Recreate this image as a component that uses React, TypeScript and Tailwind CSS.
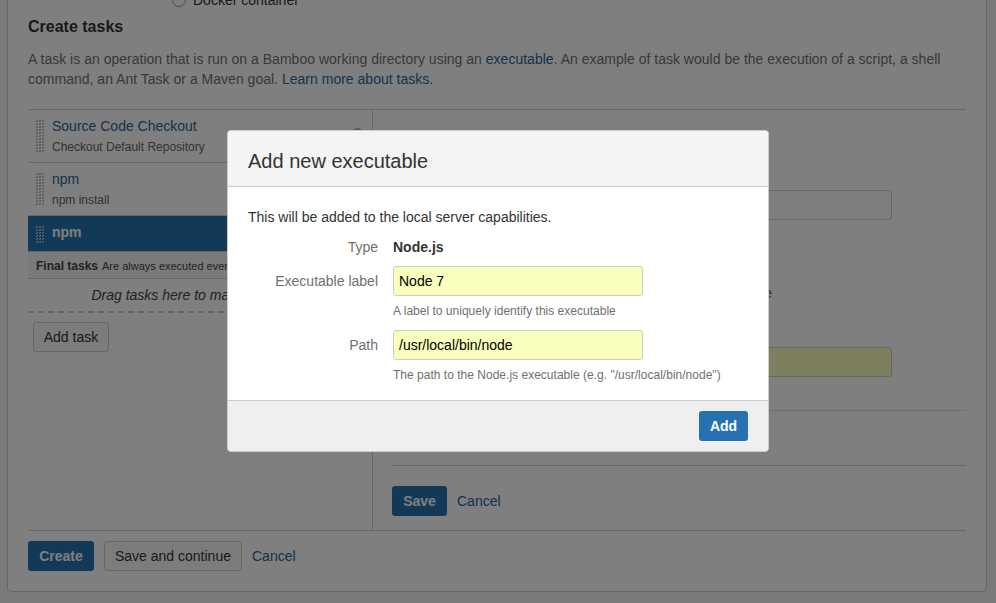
import React from "react";

function Grip({ rows, light = false }: { rows: number; light?: boolean }) {
  const dots: React.ReactNode[] = [];
  for (let y = 0; y < rows; y++) {
    for (let x = 0; x < 3; x++) {
      dots.push(
        <g key={`${x}-${y}`}>
          <rect x={x * 3} y={y * 3} width="2" height="2" fill={light ? "#5f8fb8" : "#e4e4e4"} />
          <rect x={x * 3 + 1} y={y * 3} width="1" height="1" fill={light ? "#d8d8d8" : "#a4a4a4"} />
          <rect x={x * 3} y={y * 3 + 1} width="1" height="1" fill={light ? "#c4c4c4" : "#a4a4a4"} />
        </g>
      );
    }
  }
  return (
    <svg className="ml-2 shrink-0" width="8" height={rows * 3 - 1} shapeRendering="crispEdges">
      {dots}
    </svg>
  );
}

function TaskRow({ title, detail }: { title: string; detail: string }) {
  return (
    <div className="flex h-[53px] border-b border-[#ccc] pt-[10px]">
      <Grip rows={11} />
      <div className="ml-2 -mt-1">
        <div className="h-[21px] text-[#2a6496]">{title}</div>
        <div className="h-5 text-xs leading-5 text-[#666]">{detail}</div>
      </div>
    </div>
  );
}

function Field({ label, value, hint }: { label: string; value: string; hint: string }) {
  return (
    <div className="flex h-16">
      <div className="w-[130px] pt-[5px] text-right text-[#707070]">{label}</div>
      <div className="ml-[15px]">
        <input
          className="block h-[30px] w-[250px] rounded-[3px] border border-[#ccc] bg-[#faffbd] px-[5px] text-sm text-black outline-none"
          defaultValue={value}
        />
        <div className="mt-[5px] text-xs leading-5 tracking-[0.015px] whitespace-nowrap text-[#707070]">{hint}</div>
      </div>
    </div>
  );
}

const primary = "flex h-[30px] items-center justify-center rounded-[3px] bg-[#2672b0] font-bold text-white";
const secondary =
  "flex h-[30px] items-center justify-center rounded-[3px] border border-[#ccc] bg-[#f9f9f9] text-[#333]";

function Page() {
  return (
    <div className="h-[603px] overflow-hidden bg-[#f5f5f5]">
      <div className="ml-[7px] flex h-[592px] w-[980px] flex-col rounded-b-[5px] border border-t-0 border-[#ccc] bg-white px-5">
        <div className="flex h-[10px] shrink-0 items-end pl-36">
          <div className="mb-[3px] h-[14px] w-[14px] rounded-full border border-[#999] bg-white" />
          <div className="ml-[7px] leading-5 text-[#333]">Docker container</div>
        </div>
        <h3 className="mt-[7px] h-5 text-base leading-5 font-bold text-[#333]">Create tasks</h3>
        <p className="mt-3 h-[60px] tracking-[0.013px] whitespace-nowrap text-[#707070]">
          A task is an operation that is run on a Bamboo working directory using an{" "}
          <span className="text-[#2a6496]">executable</span>. An example of task would be the execution of a script, a shell
          <br />
          command, an Ant Task or a Maven goal. <span className="text-[#2a6496]">Learn more about tasks.</span>
        </p>
        <div className="flex h-[422px] border-y border-[#ccc]">
          <div className="w-[345px] border-r border-[#ccc]">
            <div className="relative">
              <TaskRow title="Source Code Checkout" detail="Checkout Default Repository" />
              <div className="absolute top-[18px] right-2 h-[13px] w-[13px] rounded-full bg-[#b0b0b0]" />
            </div>
            <TaskRow title="npm" detail="npm install" />
            <div className="flex h-9 border-b border-[#ccc] bg-[#2672b0] pt-[10px]">
              <Grip rows={6} light />
              <div className="ml-2 -mt-1 font-bold text-white">npm</div>
            </div>
            <div className="flex h-[27px] items-center border-b border-[#ccc] bg-[#f5f5f5] pt-[2px] pl-2 whitespace-nowrap text-[#444]">
              <span className="text-xs font-bold">Final tasks</span>
              <span className="ml-1 text-[11px]">Are always executed even if a previous task fails</span>
            </div>
            <div className="h-8 pt-[6px] text-center whitespace-nowrap text-[#444] italic">Drag tasks here to make them final</div>
            <svg className="block" width="344" height="2">
              <path d="M0 1H344" stroke="#ccc" strokeWidth="2" strokeDasharray="6 4" />
            </svg>
            <div className={`mt-[9px] ml-[5px] w-[76px] ${secondary}`}>Add task</div>
          </div>
          <div className="ml-[19px] w-[574px]">
            <div className="mt-20 h-[30px] w-[500px] rounded-[3px] border border-[#ccc]" />
            <div className="mt-[63px] h-5 w-[380px] text-right text-[#2a6496]">Add new executable</div>
            <div className="mt-11 h-[30px] w-[500px] rounded-[3px] border border-[#ccc] bg-[#faffbd]" />
            <div className="mt-[33px] border-t border-[#ddd]" />
            <div className="mt-[54px] border-t border-[#ccc]" />
            <div className="mt-5 flex items-center">
              <div className={`w-[55px] ${primary}`}>Save</div>
              <span className="ml-[10px] text-[#2a6496]">Cancel</span>
            </div>
          </div>
        </div>
        <div className="mt-[10px] flex items-center">
          <div className={`w-[66px] ${primary}`}>Create</div>
          <div className={`ml-[10px] w-[138px] ${secondary}`}>Save and continue</div>
          <span className="ml-[10px] text-[#2a6496]">Cancel</span>
        </div>
      </div>
    </div>
  );
}

function Dialog() {
  return (
    <div className="absolute top-[130px] left-[227px] flex h-[322px] w-[542px] flex-col overflow-hidden rounded-[4px] border border-[#ccc] bg-white">
      <h2 className="flex h-14 items-center border-b border-[#ccc] bg-[#f4f4f4] pt-[6px] pb-px pl-5 text-xl text-[#333]">
        Add new executable
      </h2>
      <div className="h-[213px] px-5 pt-5">
        <p className="text-[#333]">This will be added to the local server capabilities.</p>
        <div className="mt-[10px] mb-[9px] flex">
          <div className="w-[130px] text-right text-[#707070]">Type</div>
          <div className="ml-[15px] font-bold text-[#333]">Node.js</div>
        </div>
        <Field label="Executable label" value="Node 7" hint="A label to uniquely identify this executable" />
        <Field label="Path" value="/usr/local/bin/node" hint={'The path to the Node.js executable (e.g. "/usr/local/bin/node")'} />
      </div>
      <div className="flex flex-1 items-center justify-end border-t border-[#ccc] bg-[#efefef] pr-5">
        <button className={`w-[49px] ${primary}`}>Add</button>
      </div>
    </div>
  );
}

export default function App() {
  return (
    <div className="relative h-[603px] w-[996px] overflow-hidden font-['Liberation_Sans',Arial,sans-serif] text-sm leading-5">
      <Page />
      <div className="absolute inset-0 bg-black/50" />
      <Dialog />
    </div>
  );
}
